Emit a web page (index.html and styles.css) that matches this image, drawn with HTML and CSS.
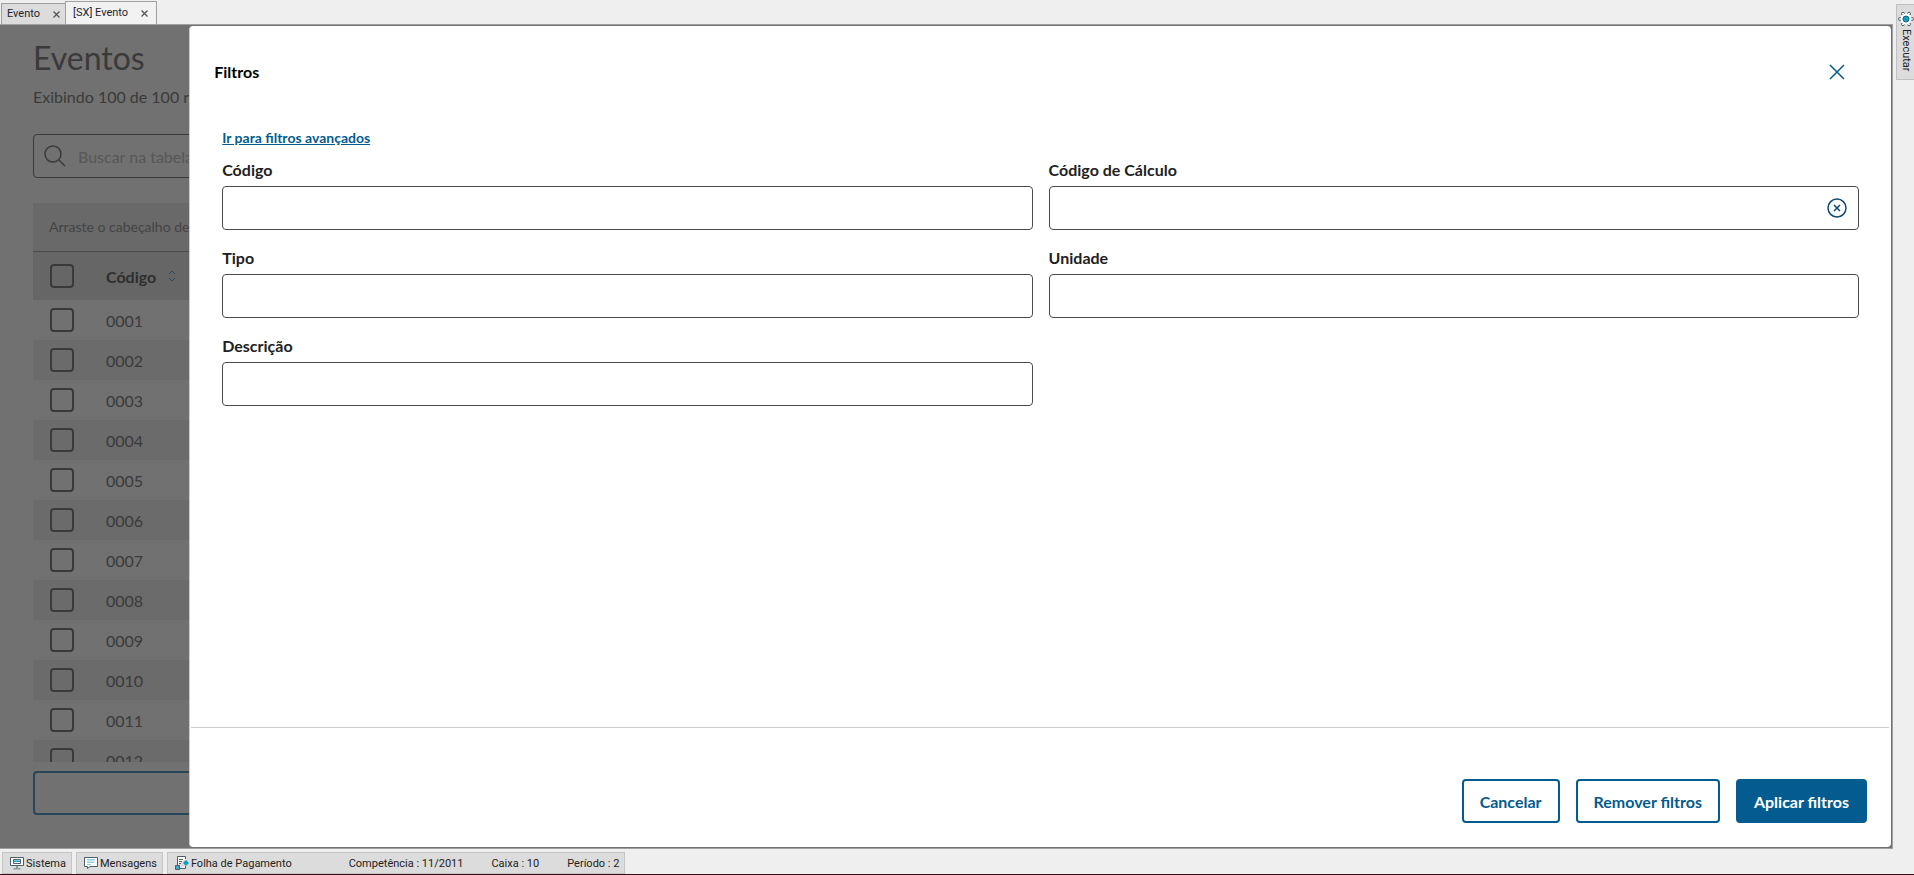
FILE: index.html
```
<!DOCTYPE html>
<html lang="pt-BR">
<head>
    <meta charset="UTF-8">
    <title>Evento</title>
    <link rel="stylesheet" href="styles.css">
</head>
<body>
<div class="window">
    <div class="left">
        <nav class="tabs">
            <div class="tab">
                <span>Evento</span>
                <button class="tabClose" aria-label="Fechar Evento">
                    <svg width="7" height="7" viewBox="0 0 7 7"><path d="M0.5 0.5l6 6M6.5 0.5l-6 6"/></svg>
                </button>
            </div>
            <div class="tab active">
                <span>[SX] Evento</span>
                <button class="tabClose" aria-label="Fechar [SX] Evento">
                    <svg width="7" height="7" viewBox="0 0 7 7"><path d="M0.5 0.5l6 6M6.5 0.5l-6 6"/></svg>
                </button>
            </div>
        </nav>

        <main class="workspace">
            <section class="page">
                <h1>Eventos</h1>
                <p class="subtitle">Exibindo 100 de 100 registros</p>
                <div class="search">
                    <svg width="22" height="22" viewBox="0 0 22 22"><circle cx="9" cy="9" r="8"/><path d="M15 15l6 6"/></svg>
                    <input type="text" placeholder="Buscar na tabela" aria-label="Buscar na tabela">
                </div>
                <div class="tableBox">
                    <p class="groupBar">Arraste o cabeçalho de uma coluna aqui para agrupar</p>
                    <table class="events">
                        <thead>
                            <tr>
                                <th class="checkCell"><input type="checkbox" aria-label="Selecionar todos"></th>
                                <th>
                                    <span class="sortable">Código
                                        <svg width="8" height="12" viewBox="0 0 8 12"><path d="M1 4l3-3 3 3M1 8l3 3 3-3"/></svg>
                                    </span>
                                </th>
                            </tr>
                        </thead>
                        <tbody>
                            <tr><td class="checkCell"><input type="checkbox" aria-label="0001"></td><td>0001</td></tr>
                            <tr><td class="checkCell"><input type="checkbox" aria-label="0002"></td><td>0002</td></tr>
                            <tr><td class="checkCell"><input type="checkbox" aria-label="0003"></td><td>0003</td></tr>
                            <tr><td class="checkCell"><input type="checkbox" aria-label="0004"></td><td>0004</td></tr>
                            <tr><td class="checkCell"><input type="checkbox" aria-label="0005"></td><td>0005</td></tr>
                            <tr><td class="checkCell"><input type="checkbox" aria-label="0006"></td><td>0006</td></tr>
                            <tr><td class="checkCell"><input type="checkbox" aria-label="0007"></td><td>0007</td></tr>
                            <tr><td class="checkCell"><input type="checkbox" aria-label="0008"></td><td>0008</td></tr>
                            <tr><td class="checkCell"><input type="checkbox" aria-label="0009"></td><td>0009</td></tr>
                            <tr><td class="checkCell"><input type="checkbox" aria-label="0010"></td><td>0010</td></tr>
                            <tr><td class="checkCell"><input type="checkbox" aria-label="0011"></td><td>0011</td></tr>
                            <tr><td class="checkCell"><input type="checkbox" aria-label="0012"></td><td>0012</td></tr>
                        </tbody>
                    </table>
                </div>
                <button class="more" aria-label="Carregar mais"></button>
            </section>

            <section class="panel" role="dialog" aria-labelledby="panelTitle">
                <header class="panelHeader">
                    <h2 id="panelTitle">Filtros</h2>
                    <button class="iconButton" aria-label="Fechar">
                        <svg width="16" height="16" viewBox="0 0 16 16"><path d="M1 1l14 14M15 1L1 15"/></svg>
                    </button>
                </header>
                <form class="filters">
                    <a href="#">Ir para filtros avançados</a>
                    <div class="fields">
                        <div class="field">
                            <label for="codigo">Código</label>
                            <div class="inputBox"><input type="text" id="codigo"></div>
                        </div>
                        <div class="field">
                            <label for="calculo">Código de Cálculo</label>
                            <div class="inputBox">
                                <input type="text" id="calculo">
                                <button type="button" class="iconButton clear" aria-label="Limpar">
                                    <svg width="20" height="20" viewBox="0 0 20 20"><circle cx="10" cy="10" r="9"/><path d="M7 7l6 6M13 7l-6 6"/></svg>
                                </button>
                            </div>
                        </div>
                        <div class="field">
                            <label for="tipo">Tipo</label>
                            <div class="inputBox"><input type="text" id="tipo"></div>
                        </div>
                        <div class="field">
                            <label for="unidade">Unidade</label>
                            <div class="inputBox"><input type="text" id="unidade"></div>
                        </div>
                        <div class="field">
                            <label for="descricao">Descrição</label>
                            <div class="inputBox"><input type="text" id="descricao"></div>
                        </div>
                    </div>
                </form>
                <footer class="panelFooter">
                    <button class="button">Cancelar</button>
                    <button class="button">Remover filtros</button>
                    <button class="button primary">Aplicar filtros</button>
                </footer>
            </section>
        </main>
    </div>

    <aside class="rail">
        <button class="railButton">
            <svg width="16" height="16" viewBox="0 0 16 16">
                <g class="gear">
                    <circle cx="14" cy="8" r="1.500"/>
                    <circle cx="11" cy="13.200" r="1.500"/>
                    <circle cx="5" cy="13.200" r="1.500"/>
                    <circle cx="2" cy="8" r="1.500"/>
                    <circle cx="5" cy="2.800" r="1.500"/>
                    <circle cx="11" cy="2.800" r="1.500"/>
                </g>
                <circle class="ring" cx="8" cy="8" r="5.500"/>
                <circle class="hub" cx="8" cy="8" r="3"/>
            </svg>
            <span>Executar</span>
        </button>
    </aside>
</div>

<footer class="statusBar">
    <button class="statusItem">
        <svg width="14" height="14" viewBox="0 0 14 14">
            <path class="outline" d="M.5 1.500h13v8H.5z"/>
            <path class="outline" d="M3.500 3.500h7v4h-7z"/>
            <path class="fill" d="M4 4.500h6V6H4z"/>
            <path class="stand" d="M6 10h2v2h2.500v1.500h-7V12H6z"/>
        </svg>
        Sistema
    </button>
    <button class="statusItem">
        <svg width="14" height="14" viewBox="0 0 14 14">
            <path class="outline" d="M.5 1.500h13v9H6l-2.500 2v-2h-3z"/>
            <path class="light" d="M3 3h8v1.500H3zM3 5.500h7V7H3zM3 8h4v1H3z"/>
        </svg>
        Mensagens
    </button>
    <div class="statusItem info">
        <svg width="14" height="14" viewBox="0 0 14 14">
            <path class="outline" d="M2.500 9V.5h8V3M10.500 10v2.500H5"/>
            <path class="outline" d="M4 3.500h4M4 5.500h3M4 7.500h2"/>
            <path class="fill" d="M11 4l3 3-3 3-3-3z"/>
            <path class="drum" d="M.5 9.500h4v4h-4z"/>
        </svg>
        <span class="module">Folha de Pagamento</span>
        <span>Competência : 11/2011</span>
        <span>Caixa : 10</span>
        <span>Período : 2</span>
    </div>
</footer>
</body>
</html>
```
FILE: styles.css
```
* {
    box-sizing: border-box;
}
body {
    margin: 0;
    height: 100vh;
    display: flex;
    flex-direction: column;
    background: #efefef;
    border-bottom: 1px solid #3f0b18;
    font-family: "Lato", sans-serif;
    font-size: 16px;
    color: #212121;
    overflow: hidden;
}
h1, h2, p {
    margin: 0;
}
button {
    font-family: inherit;
    padding: 0;
    border: none;
    background: none;
}
svg {
    display: block;
    flex: none;
    fill: none;
}
.window {
    flex: 1;
    min-height: 0;
    display: flex;
}
.left {
    flex: 1;
    min-width: 0;
    display: flex;
    flex-direction: column;
}

/* tabs */
.tabs {
    display: flex;
    align-items: flex-end;
    height: 24px;
    padding-left: 1px;
    font-family: "Roboto", sans-serif;
    font-size: 11px;
    line-height: 12px;
    color: #1e1e2e;
}
.tab {
    display: flex;
    align-items: center;
    gap: 13px;
    height: 21px;
    padding: 0 5px;
    background: #dcdcdc;
    border: 1px solid #a0a0a0;
    border-bottom: none;
    border-right: none;
}
.tab.active {
    height: 23px;
    padding: 0 8px 0 7px;
    background: #f2f2f2;
    border-right: 1px solid #a0a0a0;
}
.tabClose svg {
    stroke: #555;
    stroke-width: 1.3;
}

/* page behind the panel */
.workspace {
    flex: 1;
    min-height: 0;
    position: relative;
    border: 1px solid #a0a0a0;
    border-left: none;
    background: #717171;
}
.page {
    height: 100%;
    display: flex;
    flex-direction: column;
    padding: 11px 33px 33px;
    color: #3a3a3a;
}
.page h1 {
    font-size: 32px;
    line-height: 44px;
    font-weight: 400;
}
.subtitle {
    margin-top: 5px;
    line-height: 24px;
}
.search {
    display: flex;
    align-items: center;
    gap: 12px;
    height: 44px;
    margin-top: 25px;
    padding: 0 10px;
    border: 1px solid #3a3a3a;
    border-radius: 4px;
}
.search svg {
    stroke: #3a3a3a;
    stroke-width: 1.5;
}
.search input {
    flex: 1;
    padding: 0;
    border: none;
    background: none;
    font: inherit;
}
.search input::placeholder {
    color: #575757;
}
.tableBox {
    flex: 1;
    min-height: 0;
    margin-top: 25px;
    overflow: hidden;
}
.groupBar {
    height: 49px;
    padding-left: 16px;
    border-bottom: 1px solid #4a4a4a;
    background: #696969;
    font-size: 14px;
    line-height: 48px;
    color: #444;
}
.events {
    width: 100%;
    border-collapse: collapse;
    text-align: left;
}
.events tr {
    height: 40px;
}
.events thead tr {
    height: 48px;
    background: #666;
    color: #2e2e2e;
}
.events tbody tr:nth-child(even) {
    background: #6b6b6b;
}
.events th, .events td {
    padding: 0;
}
.events .checkCell {
    width: 73px;
    padding-left: 17px;
}
.events input {
    display: block;
    appearance: none;
    width: 24px;
    height: 24px;
    margin: 0;
    border: 2px solid #3a3a3a;
    border-radius: 4px;
}
.sortable {
    display: flex;
    align-items: center;
    gap: 12px;
}
.sortable svg {
    stroke: #2a4b60;
}
.more {
    height: 44px;
    margin-top: 9px;
    border: 2px solid #27465a;
    border-radius: 4px;
}

/* filter panel */
.panel {
    position: absolute;
    top: 1px;
    right: 1px;
    bottom: 1px;
    width: calc(90% - 1px);
    display: flex;
    flex-direction: column;
    background: #fff;
    border-left: 1px solid #ccc;
    border-radius: 4px;
}
.panelHeader {
    display: flex;
    justify-content: space-between;
    align-items: center;
    padding: 34px 46px 34px 24px;
}
.panelHeader h2 {
    font-size: 16px;
    line-height: 24px;
    color: #000;
}
.iconButton svg {
    stroke: #045b8f;
    stroke-width: 1.5;
}
.filters {
    flex: 1;
    display: flex;
    flex-direction: column;
    gap: 10px;
    padding: 10px 32px 0;
}
.filters a {
    align-self: flex-start;
    font-size: 14px;
    font-weight: 700;
    line-height: 20px;
    color: #045b8f;
}
.fields {
    display: grid;
    grid-template-columns: 1fr 1fr;
    gap: 16px;
}
.field label {
    display: block;
    margin-bottom: 4px;
    font-weight: 700;
    line-height: 24px;
}
.inputBox {
    display: flex;
    align-items: center;
    height: 44px;
    padding: 0 11px;
    border: 1px solid #4a4a4a;
    border-radius: 4px;
}
.inputBox input {
    flex: 1;
    min-width: 0;
    padding: 0;
    border: none;
    outline: none;
    background: none;
    font: inherit;
}
.clear svg {
    stroke: #0c4a75;
}
.panelFooter {
    display: flex;
    justify-content: flex-end;
    gap: 16px;
    margin: 0 2px 0 1px;
    padding: 51px 22px 24px;
    border-top: 1px solid #ccc;
}
.button {
    height: 44px;
    padding: 0 16px;
    border: 2px solid #045b8f;
    border-radius: 4px;
    background: #fff;
    font-size: 16px;
    font-weight: 700;
    color: #045b8f;
}
.button.primary {
    background: #045b8f;
    color: #fff;
}

/* right rail */
.rail {
    width: 21px;
    padding: 4px 0 0 3px;
}
.railButton {
    display: flex;
    flex-direction: column;
    align-items: center;
    gap: 2px;
    width: 18px;
    height: 76px;
    padding-top: 6px;
    background: #dcdcdc;
    border: 1px solid #c0c0c0;
    border-right: none;
    font-family: "Roboto", sans-serif;
    font-size: 11px;
    line-height: 14px;
    color: #1e1e2e;
}
.railButton span {
    writing-mode: vertical-rl;
}
.gear {
    fill: #fff;
    stroke: #4a6068;
}
.ring {
    fill: #fff;
}
.hub {
    fill: #0aa0c8;
    stroke: #17607a;
}

/* status bar */
.statusBar {
    display: flex;
    gap: 4px;
    padding: 3px 2px 0;
    font-family: "Roboto", sans-serif;
    font-size: 11px;
    color: #222;
}
.statusItem {
    display: flex;
    align-items: center;
    gap: 2px;
    height: 22px;
    padding: 0 5px 0 7px;
    background: #dcdcdc;
    border: 1px solid #c4c4c4;
    font-size: 11px;
    color: #222;
}
.info {
    gap: 28px;
}
.info svg {
    margin-right: -26px;
}
.module {
    margin-right: 29px;
}
.outline {
    fill: #fff;
    stroke: #4a6068;
}
.fill {
    fill: #0a9cc8;
}
.stand {
    fill: #8a9a9e;
}
.light {
    fill: #8fd0e6;
}
.drum {
    fill: #3fa9c9;
    stroke: #4a6068;
}
```
